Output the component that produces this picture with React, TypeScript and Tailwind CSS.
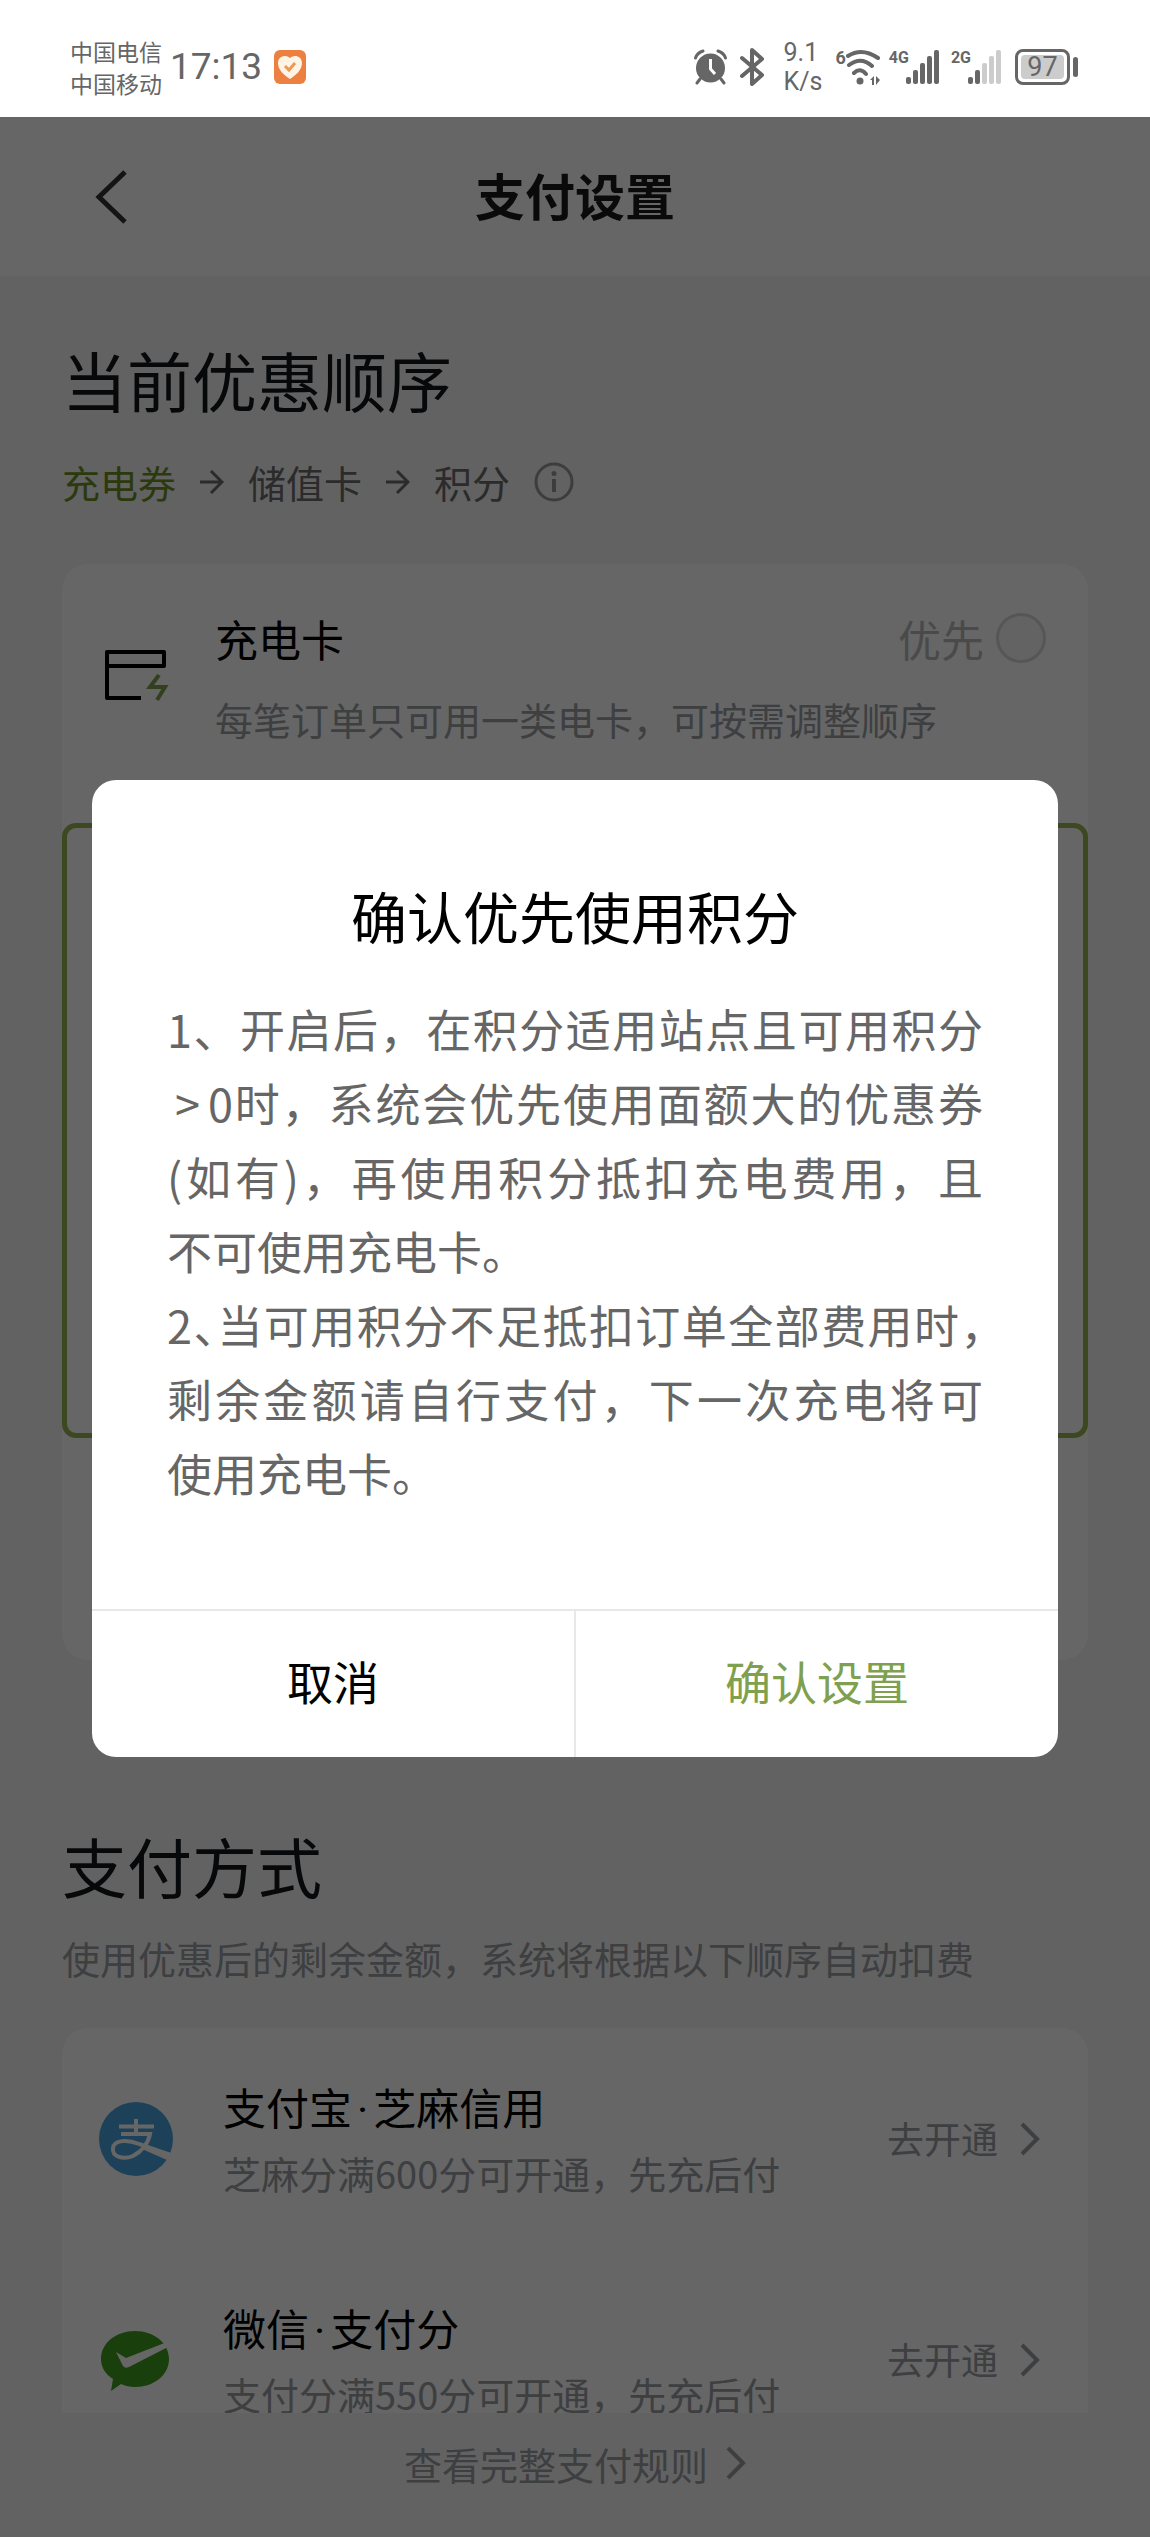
import React, { useState } from 'react';

const Chevron: React.FC = () => (
    <svg width="20" height="34" viewBox="0 0 20 34" fill="none" stroke="currentColor" strokeWidth="4" aria-hidden="true">
        <path d="M2 2 L17 17 L2 32" />
    </svg>
);

const Arrow: React.FC = () => (
    <svg width="24" height="24" viewBox="0 0 24 24" fill="none" stroke="currentColor" strokeWidth="3" aria-hidden="true">
        <path d="M0 12 H22 M11 1 L22 12 L11 23" />
    </svg>
);

const SignalBars: React.FC<{ label: string; level: number }> = ({ label, level }) => (
    <div className="flex items-start">
        <span className="font-['Roboto'] text-[16px] leading-[16px] font-bold">{label}</span>
        <svg width="36" height="34" viewBox="0 0 36 34" className="-ml-1" aria-hidden="true">
            {[7, 14, 21, 28, 34].map((h, i) => (
                <rect key={h} x={i * 7 + 1} y={34 - h} width="5" height={h} rx="2" fill={i < level ? '#666' : '#ccc'} />
            ))}
        </svg>
    </div>
);

const StatusBar: React.FC = () => (
    <div className="flex h-[117px] shrink-0 items-center justify-between bg-white pt-[16px] pr-[72px] text-[#666] pl-[70px]">
        <div className="flex items-center">
            <div className="text-[23px] leading-8">
                <p>中国电信</p>
                <p>中国移动</p>
            </div>
            <span className="ml-2 font-['Roboto'] text-[37px] leading-10">17:13</span>
            <svg width="32" height="34" viewBox="0 0 32 34" className="ml-3" aria-hidden="true">
                <rect width="32" height="34" rx="6" fill="#ec8040" />
                <path d="M16 29 C10 25 4 20 4 13 C4 6 12 4 16 8 C20 4 28 6 28 13 C28 20 22 25 16 29 Z" fill="#fff3e6" />
                <path d="M11 16 L15 20 L21 13" fill="none" stroke="#ec9a55" strokeWidth="3" />
            </svg>
        </div>
        <div className="flex items-center">
            <svg width="33" height="36" viewBox="0 0 33 36" aria-hidden="true">
                <circle cx="16.500" cy="19" r="14.500" fill="#666" />
                <path d="M1.500 9 Q3 4 9 2 M31.500 9 Q30 4 24 2 M6 30 L3 34 M27 30 L30 34" fill="none" stroke="#666" strokeWidth="3" strokeLinecap="round" />
                <path d="M16.500 10 V20 L21 25" fill="none" stroke="#fff" strokeWidth="3" />
            </svg>
            <svg width="26" height="38" viewBox="0 0 26 38" className="ml-3" fill="none" stroke="#666" strokeWidth="4" strokeLinejoin="round" strokeLinecap="round" aria-hidden="true">
                <path d="M3 10 L23 27 L13 36 V2 L23 11 L3 28" />
            </svg>
            <div className="ml-[18px] w-9 font-['Roboto'] text-[25px] leading-[29px]">
                <p>9.1</p>
                <p>K/s</p>
            </div>
            <div className="ml-4 flex items-start">
                <span className="font-['Roboto'] text-[18px] leading-[18px] font-bold">6</span>
                <svg width="35" height="36" viewBox="0 0 35 36" fill="none" stroke="#666" strokeWidth="4" strokeLinecap="round" aria-hidden="true">
                    <path d="M2 7 Q16 -2 32 9 M3 16 Q15 7 26 17 M8 24 Q14 18 20 25" />
                    <circle cx="14" cy="32" r="3.500" fill="#666" stroke="none" />
                    <path d="M24 31 L28 27 V36 H26 V31 Z M30 27 V36 L34 31 Z" fill="#666" stroke="none" />
                </svg>
            </div>
            <div className="ml-2">
                <SignalBars label="4G" level={5} />
            </div>
            <div className="ml-[10px]">
                <SignalBars label="2G" level={2} />
            </div>
            <div className="ml-3 flex items-center">
                <div className="flex h-9 w-[55px] items-center justify-center rounded-lg border-[3px] border-[#666] p-[3px]">
                    <span className="flex h-full w-full items-center justify-center rounded-sm bg-[#ccc] font-['Roboto'] text-[27px] leading-6">97</span>
                </div>
                <span className="ml-[3px] h-5 w-[5px] rounded-sm bg-[#666]" />
            </div>
        </div>
    </div>
);

const AlipayLogo: React.FC = () => (
    <svg width="74" height="74" viewBox="0 0 74 74" aria-hidden="true">
        <circle cx="37" cy="37" r="37" fill="#4ba4e0" />
        <path d="M37 17 V31 M20 24.500 H55 M22 32 H51 C49 42 42 50 34 54 C24 58 13 55 14 46 C15 38 28 37 40 42 L71 53" fill="none" stroke="#fff" strokeWidth="4" />
        <path d="M46 43 L72 51 L68 58 L43 47 Z" fill="#fff" />
    </svg>
);

const WechatLogo: React.FC = () => (
    <svg width="74" height="74" viewBox="0 0 74 74" aria-hidden="true">
        <path d="M36 8 C55 8 70 20 70 36 C70 52 55 64 36 64 C31 64 26 63 22 61 L12 68 L14 56 C6 51 2 44 2 36 C2 20 17 8 36 8 Z" fill="#3c9d20" />
        <path d="M17 29 L27 35 L68 19 L71 23 L30 44 Q26 46 24 43 Z" fill="#fff" />
    </svg>
);

interface PayMethod {
    brand: string;
    product: string;
    desc: string;
    logo: React.ReactNode;
}

const methods: PayMethod[] = [
    { brand: '支付宝', product: '芝麻信用', desc: '芝麻分满600分可开通，先充后付', logo: <AlipayLogo /> },
    { brand: '微信', product: '支付分', desc: '支付分满550分可开通，先充后付', logo: <WechatLogo /> },
];

const ConfirmDialog: React.FC<{ onClose: () => void }> = ({ onClose }) => (
    <div className="absolute inset-x-0 top-[117px] bottom-0 bg-black/60 px-[92px] pt-[663px]">
        <div role="dialog" aria-modal="true" aria-labelledby="dialog-title" className="overflow-hidden rounded-3xl bg-white">
            <div className="px-[75px] pt-[95px] pb-[99px]">
                <h2 id="dialog-title" className="text-center text-[56px] leading-[80px]">确认优先使用积分</h2>
                <div className="mt-[37px] text-justify text-[45px] leading-[74px] text-[#666]">
                    <p>
                        1、开启后，在积分适用站点且可用积分<span className="inline-block px-2">&gt;</span>0时，系统会优先使用面额大的优惠券(如有)，再使用积分抵扣充电费用，且<span className="whitespace-nowrap">不可使用充电卡。</span>
                    </p>
                    {/* half-width comma keeps the first sentence on one line */}
                    <p>
                        2<span className="[font-feature-settings:'halt']">、</span>当可用积分不足抵扣订单全部费用时<span className="[font-feature-settings:'halt']">，</span>剩余金额请自行支付，下一次充电将可<span className="whitespace-nowrap">使用充电卡。</span>
                    </p>
                </div>
            </div>
            <div className="flex h-[148px] border-t-2 border-[#e8e8e8] text-[46px]">
                <button onClick={onClose} className="flex-1 border-r-2 border-[#e8e8e8] pb-2">取消</button>
                <button onClick={onClose} className="flex-1 pb-2 text-[#7fa04e]">确认设置</button>
            </div>
        </div>
    </div>
);

const App: React.FC = () => {
    const [isDialogOpen, setIsDialogOpen] = useState(true);
    const [cardFirst, setCardFirst] = useState(false);

    return (
        <div className="relative flex h-screen flex-col overflow-hidden bg-[#f5f5f5] font-['Noto_Sans_CJK_SC',sans-serif] text-black">
            <StatusBar />

            <header className="grid h-[159px] shrink-0 grid-cols-[1fr_auto_1fr] items-center bg-white px-[94px]">
                <button aria-label="返回" className="justify-self-start text-[#333]">
                    <svg width="34" height="54" viewBox="0 0 34 54" fill="none" stroke="currentColor" strokeWidth="5">
                        <path d="M31 2 L5 27 L31 52" />
                    </svg>
                </button>
                <h1 className="pb-1.5 text-[50px] leading-[72px] font-bold text-[#1a1a1a]">支付设置</h1>
            </header>

            <main className="min-h-0 flex-1 overflow-hidden px-[62px] pt-[58px]">
                <h2 className="text-[65px] leading-[90px] text-[#111418]">当前优惠顺序</h2>
                <div className="mt-[30px] flex items-center gap-6 text-[38px] leading-[56px] text-[#6b6b6b]">
                    <span className="text-[#6c8f22]">充电券</span>
                    <Arrow />
                    <span>储值卡</span>
                    <Arrow />
                    <span>积分</span>
                    <button aria-label="说明" className="text-[#999]">
                        <svg width="40" height="40" viewBox="0 0 40 40" fill="none" stroke="currentColor" strokeWidth="3">
                            <circle cx="20" cy="20" r="18" />
                            <path d="M20 17 V30" strokeWidth="4" />
                            <circle cx="20" cy="11.500" r="2.500" fill="currentColor" stroke="none" />
                        </svg>
                    </button>
                </div>

                <section className="mt-[54px] rounded-[26px] bg-white pb-[222px]">
                    <div className="flex h-[259px] items-start pt-[43px] pr-[42px] pl-[41px]">
                        <svg width="66" height="54" viewBox="0 0 66 54" className="mt-[41px] shrink-0" fill="none" strokeWidth="4" aria-hidden="true">
                            <path d="M38 50 H4 V4 H61 V18 H4" stroke="#000" strokeLinejoin="round" />
                            <path d="M56 27 L47 39 H62 L54 52" stroke="#7fa04e" />
                        </svg>
                        <div className="ml-[46px] flex-1">
                            <div className="flex items-center justify-between text-[43px] leading-[62px]">
                                <h3>充电卡</h3>
                                <label className="flex items-center gap-3 text-[#b8b8b8]">
                                    优先
                                    <input
                                        type="radio"
                                        checked={cardFirst}
                                        onChange={() => setCardFirst(true)}
                                        className="size-[50px] appearance-none rounded-full border-[3px] border-[#d8d8d8] bg-[#f7f7f7] checked:bg-[#7fa04e]"
                                    />
                                </label>
                            </div>
                            <p className="mt-[22px] text-[38px] leading-[56px] text-[#9a9da3]">每笔订单只可用一类电卡，可按需调整顺序</p>
                        </div>
                    </div>
                    <div className="h-[615px] rounded-[14px] border-[5px] border-[#94b552]" />
                </section>

                <h2 className="mt-[160px] text-[65px] leading-[90px] text-[#111418]">支付方式</h2>
                <p className="mt-[20px] text-[38px] leading-[56px] text-[#9a9da3]">使用优惠后的剩余金额，系统将根据以下顺序自动扣费</p>

                <ul className="mt-[42px] rounded-[26px] bg-white">
                    {methods.map((method) => (
                        <li key={method.brand} className="flex h-[221px] items-center pr-[48px] pl-[37px]">
                            {method.logo}
                            <div className="ml-[50px] flex-1">
                                <h3 className="text-[43px] leading-[68px]">
                                    {method.brand}
                                    <span className="px-[5px] font-['Roboto'] leading-none">·</span>
                                    {method.product}
                                </h3>
                                <p className="text-[38px] leading-[66px] text-[#9a9da3]">{method.desc}</p>
                            </div>
                            <a href="#open" className="flex items-center gap-[22px] text-[37px] text-[#9a9da3]">
                                去开通
                                <Chevron />
                            </a>
                        </li>
                    ))}
                </ul>
            </main>

            <footer className="flex h-[124px] shrink-0 justify-center pt-[22px]">
                <a href="#rules" className="flex h-[56px] items-center gap-[18px] text-[38px] text-[#9a9da3]">
                    查看完整支付规则
                    <Chevron />
                </a>
            </footer>

            {isDialogOpen && <ConfirmDialog onClose={() => setIsDialogOpen(false)} />}
        </div>
    );
};

export default App;
